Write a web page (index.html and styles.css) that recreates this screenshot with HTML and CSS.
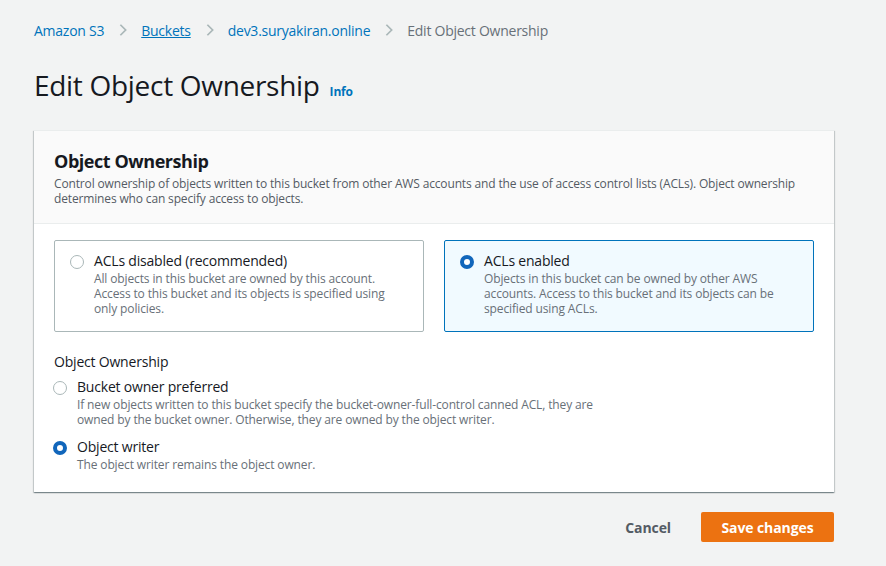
FILE: index.html
```html
<!DOCTYPE html>
<html>
<head>
<meta charset="utf-8">
<link rel="stylesheet" href="styles.css">
</head>
<body>
<div class="page">
  <nav class="crumbs">
    <a class="crumb">Amazon S3</a>
    <svg class="chev" viewBox="0 0 16 16"><path d="M5 2l6 6-6 6" fill="none" stroke="#aab7b8" stroke-width="2"/></svg>
    <a class="crumb u">Buckets</a>
    <svg class="chev" viewBox="0 0 16 16"><path d="M5 2l6 6-6 6" fill="none" stroke="#aab7b8" stroke-width="2"/></svg>
    <a class="crumb">dev3.suryakiran.online</a>
    <svg class="chev" viewBox="0 0 16 16"><path d="M5 2l6 6-6 6" fill="none" stroke="#aab7b8" stroke-width="2"/></svg>
    <span class="crumb cur">Edit Object Ownership</span>
  </nav>
  <div class="title-row">
    <h1>Edit Object Ownership</h1>
    <a class="info">Info</a>
  </div>
  <section class="card">
    <div class="card-head">
      <h2>Object Ownership</h2>
      <p>Control ownership of objects written to this bucket from other AWS accounts and the use of access control lists (ACLs). Object ownership determines who can specify access to objects.</p>
    </div>
    <div class="card-body">
      <div class="tiles">
        <div class="tile">
          <span class="radio"></span>
          <div class="opt">
            <div class="opt-label">ACLs disabled (recommended)</div>
            <div class="opt-desc">All objects in this bucket are owned by this account. Access to this bucket and its objects is specified using only policies.</div>
          </div>
        </div>
        <div class="tile sel">
          <span class="radio on"></span>
          <div class="opt">
            <div class="opt-label">ACLs enabled</div>
            <div class="opt-desc">Objects in this bucket can be owned by other AWS accounts. Access to this bucket and its objects can be specified using ACLs.</div>
          </div>
        </div>
      </div>
      <div class="field-label">Object Ownership</div>
      <div class="radios">
        <div class="ropt">
          <span class="radio"></span>
          <div class="opt">
            <div class="opt-label">Bucket owner preferred</div>
            <div class="opt-desc wide">If new objects written to this bucket specify the bucket-owner-full-control canned ACL, they are owned by the bucket owner. Otherwise, they are owned by the object writer.</div>
          </div>
        </div>
        <div class="ropt">
          <span class="radio on"></span>
          <div class="opt">
            <div class="opt-label">Object writer</div>
            <div class="opt-desc">The object writer remains the object owner.</div>
          </div>
        </div>
      </div>
    </div>
  </section>
  <div class="actions">
    <button class="btn link">Cancel</button>
    <button class="btn primary">Save changes</button>
  </div>
</div>
</body>
</html>
```
FILE: styles.css
```css
* { box-sizing: border-box; }
html, body { margin: 0; padding: 0; }
body {
  background: #f2f3f3;
  font-family: "Open Sans", "Noto Sans", sans-serif;
  color: #16191f;
  width: 886px;
  height: 566px;
  overflow: hidden;
}
.page { padding: 20px 52px 0 34px; }
.crumbs { display: flex; align-items: center; height: 20px; font-size: 14px; letter-spacing: -0.25px; }
.crumb { color: #0073bb; text-decoration: none; }
.crumb.u { text-decoration: underline; }
.crumb.cur { color: #687078; }
.chev { width: 14px; height: 14px; margin: 0 11px 0 12px; }
.title-row { display: flex; align-items: baseline; margin-top: 18px; height: 54px; }
h1 { font-size: 28px; font-weight: 400; margin: 0; line-height: 54px; letter-spacing: -0.3px; }
.info { color: #0073bb; font-size: 12px; font-weight: 700; margin-left: 10px; letter-spacing: -0.2px; }
.card {
  margin-top: 18px;
  background: #fff;
  box-shadow: 0 1px 1px 0 rgba(0,28,36,.3), 1px 1px 1px 0 rgba(0,28,36,.15), -1px 1px 1px 0 rgba(0,28,36,.15);
  border-top: 1px solid #eaeded;
}
.card-head { background: #fafafa; border-bottom: 1px solid #eaeded; padding: 18px 20px 17px; }
h2 { font-size: 18px; font-weight: 700; margin: 0; line-height: 24px; letter-spacing: -0.45px; }
.card-head p { margin: 3px 0 0; font-size: 12px; line-height: 15px; color: #545b64; letter-spacing: -0.15px; }
.card-body { padding: 16px 20px 20px; }
.tiles { display: grid; grid-template-columns: 1fr 1fr; gap: 20px; }
.tile { display: flex; border: 1px solid #aab7b8; border-radius: 2px; padding: 10px 20px 14px 15px; height: 92px; }
.tile.sel { border-color: #0073bb; background: #f1faff; }
.radio { flex: none; width: 14px; height: 14px; border: 1.5px solid #aab7b8; border-radius: 50%; margin: 4px 10px 0 0; background: #fff; box-sizing: border-box; }
.radio.on { border: 4.5px solid #1166bb; }
.opt-label { font-size: 14px; line-height: 20px; letter-spacing: -0.2px; }
.opt-desc { font-size: 12px; line-height: 15px; color: #687078; margin-top: 0; letter-spacing: -0.13px; }
.field-label { font-size: 14px; line-height: 20px; margin-top: 20px; letter-spacing: -0.2px; }
.radios { display: flex; flex-direction: column; gap: 10px; margin-top: 5px; }
.ropt { display: flex; margin-left: -1px; }
.opt-desc.wide { max-width: 530px; }
.actions { display: flex; justify-content: flex-end; align-items: center; gap: 30px; margin-top: 20px; }
.btn { font-family: inherit; font-size: 14px; font-weight: 700; border: none; cursor: pointer; white-space: nowrap; letter-spacing: -0.1px; }
.btn.link { background: none; color: #545b64; padding: 0; }
.btn.primary { background: #ec7211; color: #fff; border-radius: 2px; height: 30px; padding: 0; width: 133px; text-align: center; }
```
